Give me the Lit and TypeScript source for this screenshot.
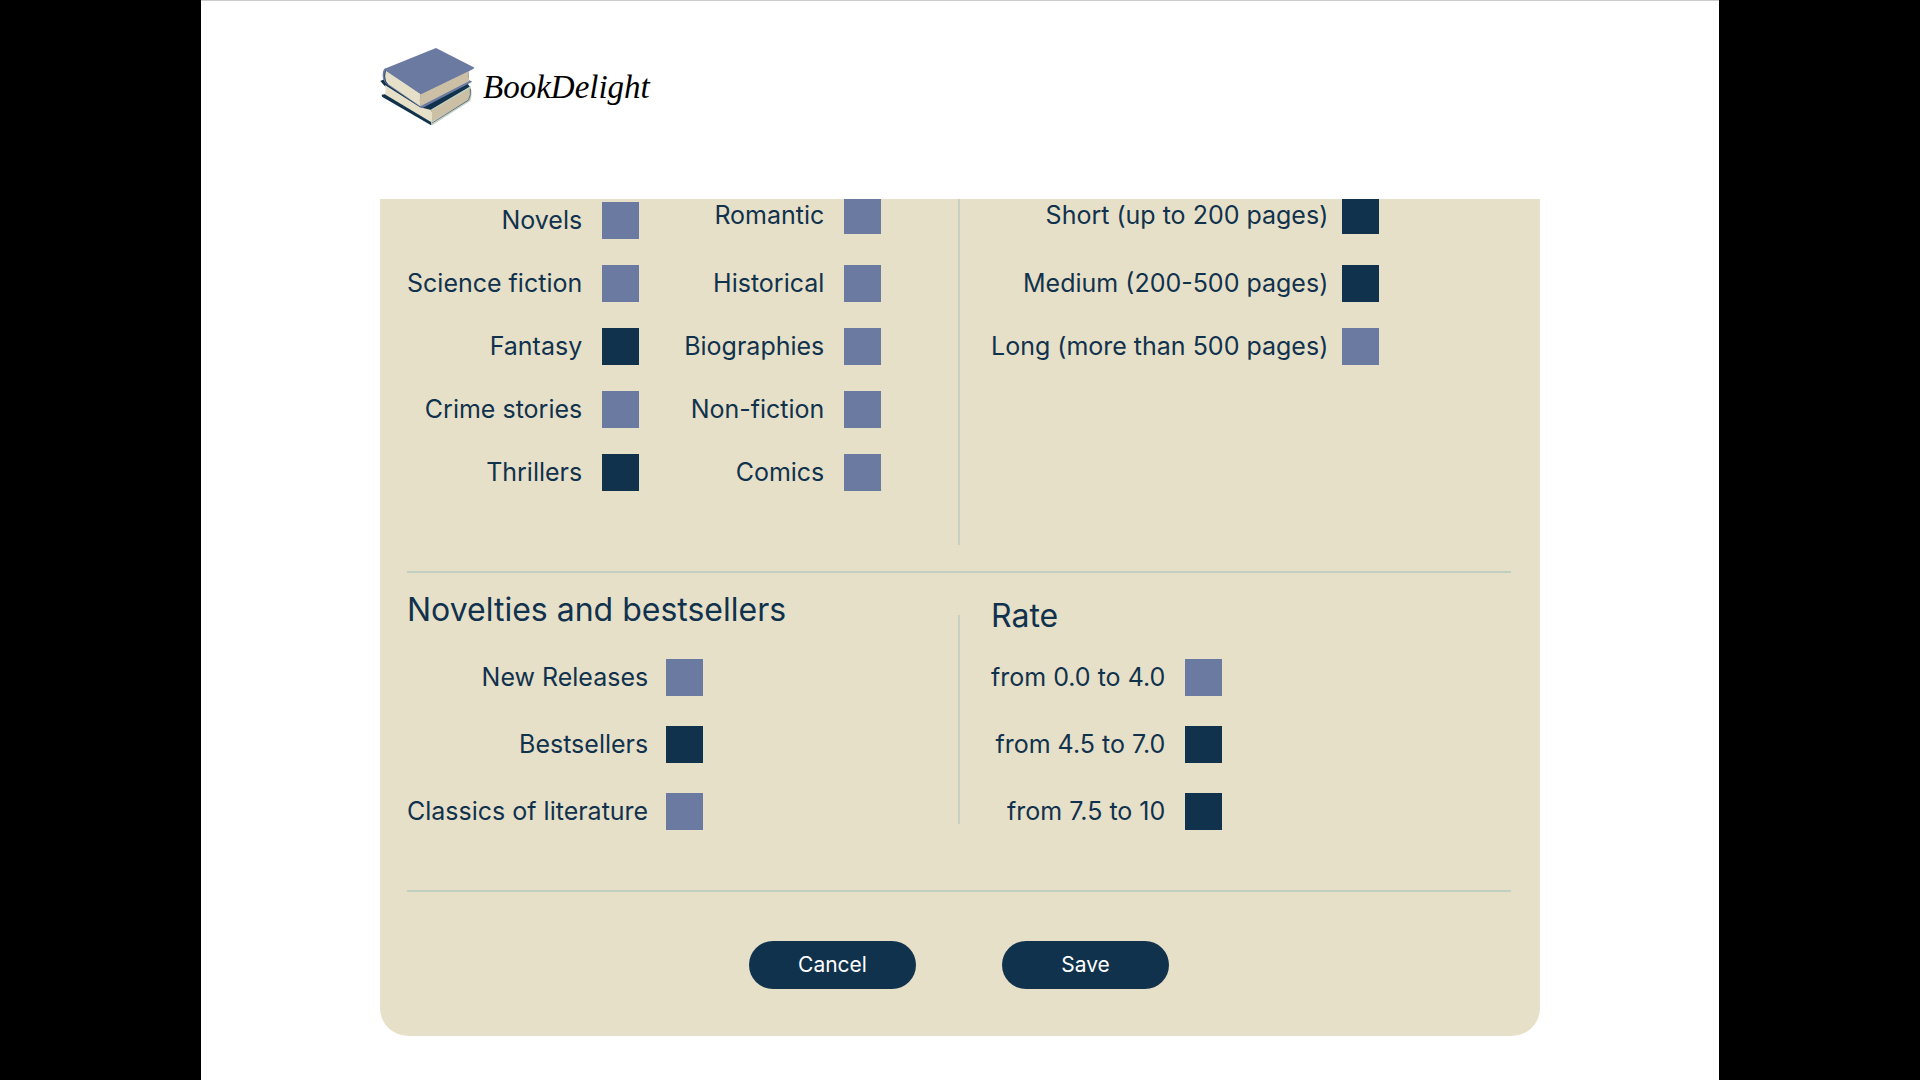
import { LitElement, html, css, svg } from "lit";
import { customElement, property, state } from "lit/decorators.js";
import { classMap } from "lit/directives/class-map.js";

interface Option {
  label: string;
  checked: boolean;
}

const on = (label: string): Option => ({ label, checked: true });
const off = (label: string): Option => ({ label, checked: false });

const logo = svg`
  <svg class="mark" viewBox="60 51 288 240" aria-hidden="true">
    <path fill="#11324d" d="M61 153 L74 147 L80 160 L215 236 L215 246 L180 236 L74 168 Z" />
    <path fill="#11324d" d="M180 232 L322 160 L330 171 L215 241 Z" />
    <path fill="#e7e0c9" d="M75 165 Q80 184 73 196 L213 278 Q219 258 214 240 L180 232 Z" />
    <path fill="#cbc0a5" d="M214 240 L330 173 Q331 196 325 211 L213 278 Q219 258 214 240 Z" />
    <path fill="#11324d" d="M65 194 L74 193 L213 276 L215 284 L212 285 L66 200 Z" />
    <path fill="none" stroke="#c1cfc0" stroke-width="4" d="M214 240 L330 172 Q336 192 329 212 L215 284" />
    <path fill="none" stroke="#11324d" stroke-width="2" d="M331 176 Q333 194 326 210 L216 279" />
    <path fill="#6b7aa1" d="M228 54 L344 113 L327 122 L327 150 L337 155 L186 235 L80 163 Q68 152 68 136 Q68 121 74 116 Z" />
    <path fill="#e7e0c9" d="M79 121 L182 192 Q177 212 181 229 L84 162 Q74 150 75 136 Q75 126 79 121 Z" />
    <path fill="#cbc0a5" d="M182 192 L327 121 Q324 138 328 153 L181 229 Q177 212 182 192 Z" />
    <path fill="none" stroke="#11324d" stroke-width="2" d="M77 120 Q71 138 77 156 L84 163" />
    <path fill="none" stroke="#6b7aa1" stroke-width="5" d="M74 117 L183 190 L340 114" />
  </svg>
`;

@customElement("option-list")
export class OptionList extends LitElement {
  @property({ attribute: false }) options: Option[] = [];
  @state() private picked = new Map<string, boolean>();

  static styles = css`
    :host {
      display: block;
    }
    .list {
      display: flex;
      flex-direction: column;
      gap: var(--row-gap, 26px);
      margin: 0;
      padding: 0;
      list-style: none;
    }
    .item:first-child {
      margin-bottom: var(--lead-gap, 0);
    }
    .option {
      display: flex;
      align-items: center;
      justify-content: flex-end;
      gap: var(--box-gap, 20px);
      font-size: 25px;
      line-height: 37px;
      white-space: nowrap;
      cursor: pointer;
    }
    .box {
      appearance: none;
      flex: none;
      width: 37px;
      height: 37px;
      margin: 0;
      background: #6b7aa1;
      cursor: pointer;
    }
    .box.checked {
      background: #11324d;
    }
  `;

  private toggle(option: Option, event: Event) {
    const next = new Map(this.picked);
    next.set(option.label, (event.target as HTMLInputElement).checked);
    this.picked = next;
  }

  render() {
    return html`
      <ul class="list">
        ${this.options.map((option) => {
          const checked = this.picked.get(option.label) ?? option.checked;
          return html`
            <li class="item">
              <label class="option">
                <span>${option.label}</span>
                <input
                  type="checkbox"
                  class=${classMap({ box: true, checked })}
                  .checked=${checked}
                  @change=${(e: Event) => this.toggle(option, e)}
                />
              </label>
            </li>
          `;
        })}
      </ul>
    `;
  }
}

@customElement("app-root")
export class AppRoot extends LitElement {
  private genres = [
    off("Novels"),
    off("Science fiction"),
    on("Fantasy"),
    off("Crime stories"),
    on("Thrillers"),
  ];
  private moreGenres = [
    off("Romantic"),
    off("Historical"),
    off("Biographies"),
    off("Non-fiction"),
    off("Comics"),
  ];
  private lengths = [
    on("Short (up to 200 pages)"),
    on("Medium (200-500 pages)"),
    off("Long (more than 500 pages)"),
  ];
  private novelties = [off("New Releases"), on("Bestsellers"), off("Classics of literature")];
  private rates = [off("from 0.0 to 4.0"), on("from 4.5 to 7.0"), on("from 7.5 to 10")];

  static styles = css`
    :host {
      display: block;
      min-height: 100vh;
      padding: 0 201px;
      box-sizing: border-box;
      background: #000;
      color: #11324d;
      font-family: Inter, "Liberation Sans", sans-serif;
    }
    .page {
      min-height: 100vh;
      padding: 0 179px 44px;
      box-sizing: border-box;
      border-top: 1px solid #ccc;
      background: #fff;
    }
    .header {
      display: flex;
      padding: 46px 0 72px;
    }
    .brand {
      display: flex;
      align-items: center;
      gap: 7px;
      color: #000;
      font: italic 33px/40px "Liberation Serif", serif;
      text-decoration: none;
    }
    .mark {
      display: block;
      width: 96px;
      height: 80px;
    }
    .panel {
      padding: 0 29px 47px 27px;
      border-radius: 0 0 28px 28px;
      background: #e7e0c9;
      overflow: hidden;
    }
    .section {
      display: grid;
      grid-template-columns: 1fr 2px 1fr;
      border-bottom: 2px solid #c1cfc0;
    }
    .divider {
      background: #c8d0c1;
    }
    .filters .divider {
      margin-bottom: 26px;
    }
    .ratings .divider {
      margin: 42px 0 66px;
    }
    .genres {
      display: flex;
      gap: 45px;
      padding: 3px 0 80px;
    }
    .raised {
      margin-top: -5px;
      --lead-gap: 5px;
    }
    .lengths {
      display: flex;
      padding: 3px 0 0 31px;
      --box-gap: 14px;
    }
    .group {
      display: flex;
      flex-direction: column;
      align-items: flex-start;
      padding-bottom: 60px;
      --row-gap: 30px;
    }
    .novelties {
      gap: 29px;
      padding-top: 17px;
      --box-gap: 18px;
    }
    .rates {
      gap: 23px;
      padding-top: 23px;
      padding-left: 31px;
    }
    .title {
      margin: 0;
      font-size: 32px;
      font-weight: 400;
      line-height: 40px;
    }
    .actions {
      display: flex;
      justify-content: center;
      gap: 86px;
      padding-top: 49px;
    }
    .button {
      width: 167px;
      height: 48px;
      padding: 0;
      border: 0;
      border-radius: 24px;
      background: #11324d;
      color: #fff;
      font: 400 21px/28px Inter, "Liberation Sans", sans-serif;
      cursor: pointer;
    }
  `;

  render() {
    return html`
      <div class="page">
        <header class="header">
          <a class="brand" href="#">${logo}<span>BookDelight</span></a>
        </header>
        <main>
          <form class="panel" @submit=${(e: Event) => e.preventDefault()}>
            <div class="section filters">
              <div class="genres">
                <option-list .options=${this.genres}></option-list>
                <option-list class="raised" .options=${this.moreGenres}></option-list>
              </div>
              <div class="divider"></div>
              <div class="lengths">
                <option-list class="raised" .options=${this.lengths}></option-list>
              </div>
            </div>
            <div class="section ratings">
              <section class="group novelties">
                <h2 class="title">Novelties and bestsellers</h2>
                <option-list .options=${this.novelties}></option-list>
              </section>
              <div class="divider"></div>
              <section class="group rates">
                <h2 class="title">Rate</h2>
                <option-list .options=${this.rates}></option-list>
              </section>
            </div>
            <div class="actions">
              <button class="button" type="button">Cancel</button>
              <button class="button" type="submit">Save</button>
            </div>
          </form>
        </main>
      </div>
    `;
  }
}
